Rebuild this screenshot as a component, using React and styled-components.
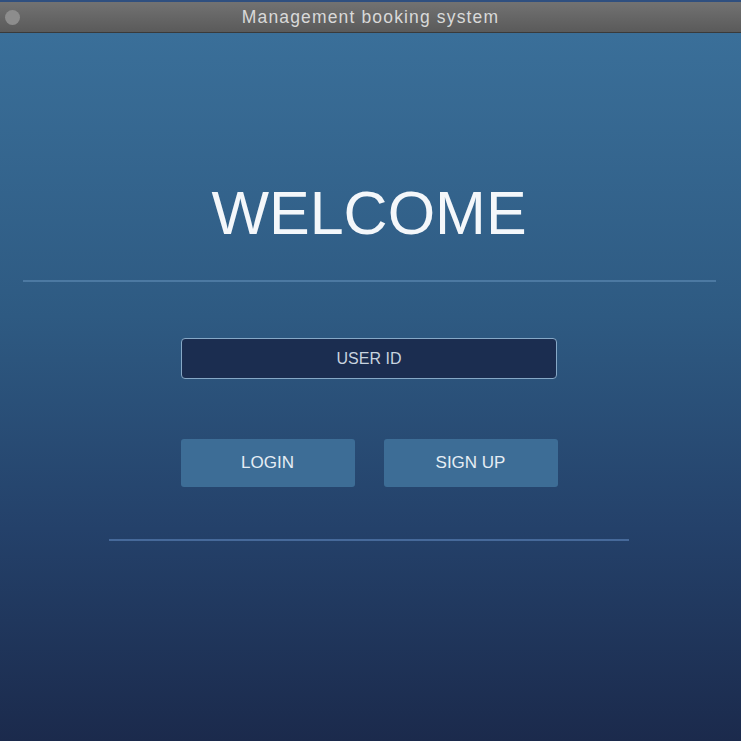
import React, {useState} from 'react';
import styled, {createGlobalStyle} from 'styled-components';

const GlobalStyle = createGlobalStyle`
  html, body {
    margin: 0;
    padding: 0;
    background: #1b2a4c;
  }
  * {
    box-sizing: border-box;
  }
`;

const Window = styled.div`
  display: flex;
  flex-direction: column;
  width: 741px;
  height: 741px;
  border-top: 2px solid #2f4f7f;
  overflow: hidden;
`;

const TitleBar = styled.div`
  position: relative;
  display: flex;
  align-items: center;
  justify-content: center;
  height: 31px;
  flex-shrink: 0;
  background: linear-gradient(#727272, #5a5a5a);
  border-bottom: 1px solid #3a3a3a;
`;

const Dot = styled.span`
  position: absolute;
  left: 5px;
  top: 8px;
  width: 15px;
  height: 15px;
  border-radius: 50%;
  background: #8d8d8d;
`;

const Title = styled.span`
  font-family: "Liberation Sans", Arial, sans-serif;
  font-size: 17.5px;
  letter-spacing: 1.15px;
  color: #d9d9d9;
`;

const Main = styled.main`
  flex: 1;
  display: flex;
  flex-direction: column;
  align-items: center;
  padding-right: 3px;
  background: linear-gradient(#3a6f99 0%, #2e5a82 40%, #24416a 70%, #1b2a4c 100%);
  font-family: "Liberation Sans", Arial, sans-serif;
`;

const Heading = styled.h1`
  margin: 150px 0 0 0;
  height: 60px;
  font-size: 61px;
  line-height: 60px;
  font-weight: 400;
  color: #f4f7fa;
`;

const Divider = styled.hr`
  align-self: ${p => p.$full ? 'stretch' : 'center'};
  width: ${p => p.$full ? 'auto' : `${p.$width}px`};
  margin: ${p => p.$top}px ${p => p.$full ? '22px 0 23px' : '0 0'};
  height: 2px;
  border: none;
  background: ${p => p.$color};
`;

const Field = styled.input`
  margin-top: 56px;
  width: 376px;
  height: 41px;
  background: #1b2d50;
  border: 1.5px solid #86a8c6;
  border-radius: 4px;
  text-align: center;
  font-family: "Liberation Sans", Arial, sans-serif;
  font-size: 16px;
  color: #c8d3df;
  outline: none;
  &::placeholder {
    color: #c8d3df;
  }
`;

const Buttons = styled.div`
  display: flex;
  gap: 29px;
  margin-top: 60px;
`;

const Button = styled.button`
  width: 174px;
  height: 48px;
  border: none;
  border-radius: 3px;
  background: #3d6d96;
  color: #e6edf4;
  font-family: "Liberation Sans", Arial, sans-serif;
  font-size: 17px;
  cursor: pointer;
`;

const App = () => {
  const [userId, setUserId] = useState('');
  return (
    <>
      <GlobalStyle/>
      <Window>
        <TitleBar>
          <Dot/>
          <Title>Management booking system</Title>
        </TitleBar>
        <Main>
          <Heading>WELCOME</Heading>
          <Divider $full $top={37} $color="#4c79a2"/>
          <Field placeholder="USER ID" value={userId} onChange={e => setUserId(e.target.value)}/>
          <Buttons>
            <Button>LOGIN</Button>
            <Button>SIGN UP</Button>
          </Buttons>
          <Divider $width={520} $top={52} $color="#46699a"/>
        </Main>
      </Window>
    </>
  );
};

export default App;
